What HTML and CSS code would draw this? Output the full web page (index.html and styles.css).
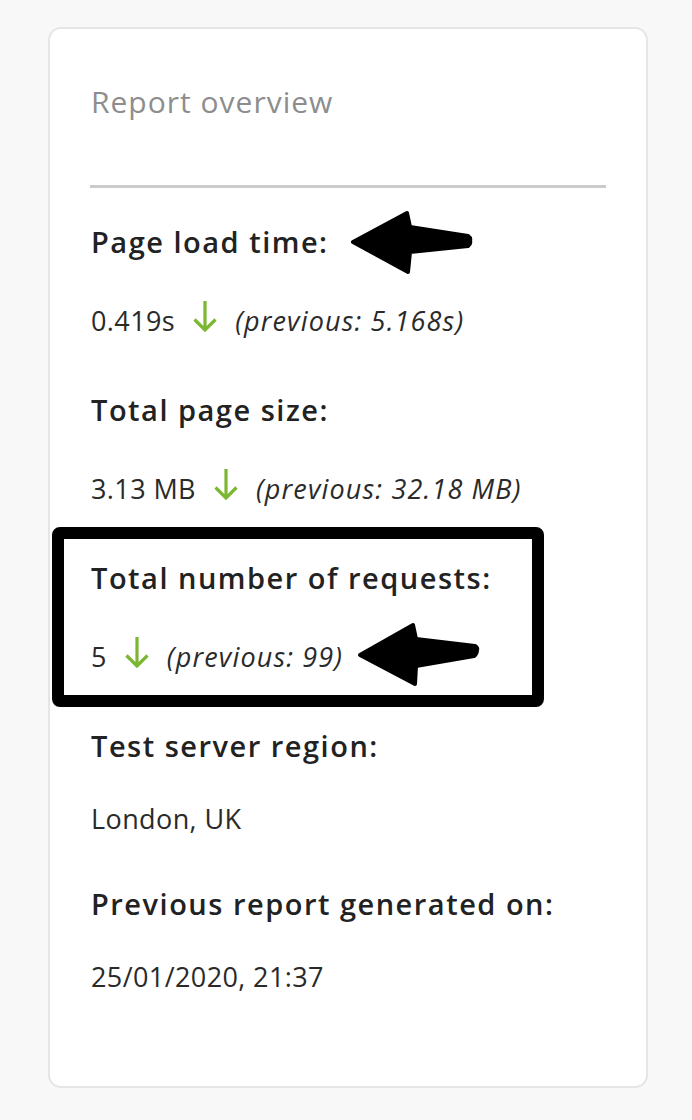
FILE: index.html
```html
<!DOCTYPE html>
<html lang="en">
<head>
<meta charset="utf-8">
<title>Report overview</title>
<link rel="stylesheet" href="styles.css">
</head>
<body>
<div class="card">
  <h2 class="card-title">Report overview</h2>
  <hr class="divider">

  <div class="metric first">
    <div class="metric-label">Page load time:</div>
    <div class="metric-value trend"><span>0.419s</span><svg class="down" viewBox="0 0 26 31" aria-hidden="true"><path d="M13 0 V29 M2.5 18.5 L13 29 L23.5 18.5"/></svg><em>(previous: 5.168s)</em></div>
  </div>

  <div class="metric">
    <div class="metric-label">Total page size:</div>
    <div class="metric-value trend"><span>3.13 MB</span><svg class="down" viewBox="0 0 26 31" aria-hidden="true"><path d="M13 0 V29 M2.5 18.5 L13 29 L23.5 18.5"/></svg><em>(previous: 32.18 MB)</em></div>
  </div>

  <div class="metric">
    <div class="metric-label">Total number of requests:</div>
    <div class="metric-value trend"><span>5</span><svg class="down" viewBox="0 0 26 31" aria-hidden="true"><path d="M13 0 V29 M2.5 18.5 L13 29 L23.5 18.5"/></svg><em>(previous: 99)</em></div>
  </div>

  <div class="metric">
    <div class="metric-label">Test server region:</div>
    <div class="metric-value">London, UK</div>
  </div>

  <div class="metric">
    <div class="metric-label">Previous report generated on:</div>
    <div class="metric-value">25/01/2020, 21:37</div>
  </div>

  <div class="mark-box"></div>
  <svg class="mark-arrow arrow-one" viewBox="0 0 124 66" aria-hidden="true"><path d="M3 32 L57 3 L60 17 L118 26 Q121 28 120 31 Q121 34 118 36 L60 42 L58 62 Z"/></svg>
  <svg class="mark-arrow arrow-two" viewBox="0 0 126 68" aria-hidden="true"><path d="M4 35 L57 5 L60 19 L119 26 Q122 28 121 30 Q121 34 118 36 L60 46 L59 64 Z"/></svg>
</div>
</body>
</html>
```

FILE: styles.css
```css
* { box-sizing: border-box; }

html, body {
  margin: 0;
  padding: 0;
  background: #f8f8f8;
}

body {
  padding: 27px 0 0 48px;
  font-family: "Open Sans", "Noto Sans", "Liberation Sans", sans-serif;
  color: #262626;
}

.card {
  position: relative;
  width: 600px;
  height: 1061px;
  background: #ffffff;
  border: 2px solid #e6e6e6;
  border-radius: 13px;
  padding: 53px 40px 0 41px;
}

.card-title {
  margin: 0;
  font-size: 30px;
  font-weight: 400;
  line-height: 40px;
  letter-spacing: 1px;
  color: #8d8d8d;
}

.divider {
  margin: 63px 0 0 -1px;
  height: 3px;
  border: 0;
  background: #cbcbcb;
}

.metric { margin-top: 45px; }
.metric.first { margin-top: 34px; }

.metric-label {
  font-size: 29px;
  font-weight: 600;
  line-height: 40px;
  letter-spacing: 1.5px;
  color: #222222;
}

.metric-value {
  margin-top: 33px;
  font-size: 27px;
  font-weight: 400;
  line-height: 40px;
  letter-spacing: 0.4px;
  color: #2a2a2a;
  white-space: nowrap;
}

.metric-value.trend { padding: 6px 0 4px; }

.metric-value em {
  font-style: italic;
  letter-spacing: 1.15px;
}

.down {
  width: 26px;
  height: 31px;
  margin: 0 17px 0 17px;
  vertical-align: -1px;
  fill: none;
  stroke: #7bb731;
  stroke-width: 3.2;
}

.mark-box {
  position: absolute;
  left: 2px;
  top: 498px;
  width: 492px;
  height: 180px;
  border: 12px solid #000000;
  border-radius: 8px;
}

.mark-arrow {
  position: absolute;
  fill: #000000;
  stroke: #000000;
  stroke-width: 4;
  stroke-linejoin: round;
}

.arrow-one {
  left: 300px;
  top: 181px;
  width: 124px;
  height: 66px;
}

.arrow-two {
  left: 306px;
  top: 591px;
  width: 126px;
  height: 68px;
}
```
